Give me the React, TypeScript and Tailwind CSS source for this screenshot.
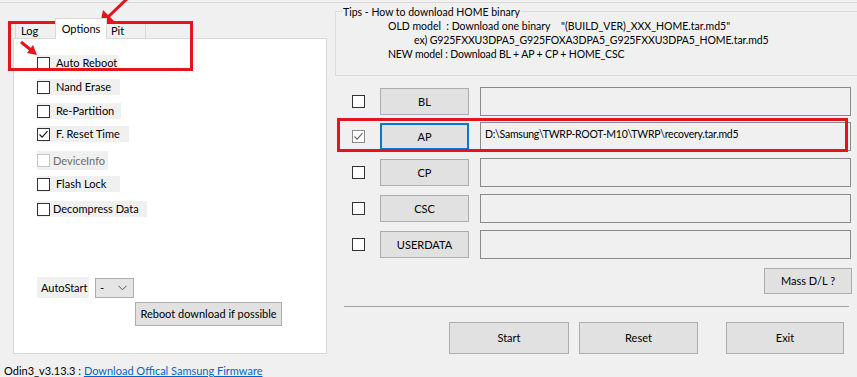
import React from "react";

function Check({ color = "#1a1a1a" }: { color?: string }) {
  return (
    <svg width="11" height="11" viewBox="0 0 11 11">
      <path d="M1.5 5.5 L4.2 8.2 L9.5 2.2" fill="none" stroke={color} strokeWidth="1.2" />
    </svg>
  );
}

function Box({ checked = false, disabled = false, soft = false }: { checked?: boolean; disabled?: boolean; soft?: boolean }) {
  const border = disabled ? "border-[#c4c4c4]" : soft ? "border-[#8a8a8a]" : "border-[#333333]";
  return (
    <span className={`w-[13px] h-[13px] shrink-0 border ${border} bg-white flex items-center justify-center`}>
      {checked && <Check color={soft ? "#6a6a6a" : "#1a1a1a"} />}
    </span>
  );
}

function OptRow({ label, w, mt, h = "h-[16px]", checked = false, disabled = false, gap = "ml-[6px]" }: { label: string; w: string; mt: string; h?: string; checked?: boolean; disabled?: boolean; gap?: string }) {
  return (
    <div className={`flex items-center bg-[#f0f0f0] ${w} ${h} ${mt}`}>
      <Box checked={checked} disabled={disabled} />
      <span className={`${gap} whitespace-nowrap ${disabled ? "text-[#6d6d6d]" : ""}`}>{label}</span>
    </div>
  );
}

function Btn({ label, cls }: { label: string; cls: string }) {
  return (
    <div className={`flex items-center justify-center whitespace-nowrap bg-[#e1e1e1] border border-[#adadad] ${cls}`}>{label}</div>
  );
}

function FileRow({ label, checked = false, active = false, value = "", mt }: { label: string; checked?: boolean; active?: boolean; value?: string; mt: string }) {
  return (
    <div className={`flex items-center h-[29px] ${mt}`}>
      <span className="ml-[17px]">
        <Box checked={checked} soft={checked} />
      </span>
      <div
        className={`ml-[15px] w-[89px] h-[27px] flex items-center justify-center bg-[#e1e1e1] ${active ? "border-2 border-[#0078d7]" : "border border-[#adadad]"}`}
      >
        {label}
      </div>
      <div className="ml-[11px] w-[371px] h-[29px] border border-[#8a8a8a] bg-[#f0f0f0] px-[4px] pt-[4px] leading-[14px] text-[10.5px] tracking-[-0.25px] whitespace-nowrap overflow-hidden">
        {value}
      </div>
    </div>
  );
}

export default function App() {
  return (
    <div className="relative w-[857px] h-[377px] overflow-hidden bg-[#f0f0f0] text-[11px] text-black font-['Lato','Noto_Sans',sans-serif] leading-[16px]">
      <div className="pt-[2px]">
        <div className="border-t border-[#dadada] flex h-[358px]">
          {/* Left column */}
          <div className="w-[335px] shrink-0 pl-[13px] pt-[15px]">
            <div className="flex items-end h-[20px] pl-[2px]">
              <div className="w-[40px] h-[16px] border-t border-l border-[#d9d9d9] flex items-center pl-[5px]">Log</div>
              <div className="relative z-10 w-[52px] h-[21px] -mb-[1px] bg-white border-t border-x border-[#d9d9d9] flex items-start justify-center pt-[2px]">Options</div>
              <div className="w-[39px] h-[16px] border-t border-r border-[#d9d9d9] flex items-center pl-[4px]">Pit</div>
            </div>
            <div className="w-[314px] h-[316px] bg-white border border-[#d9d9d9] pl-[23px] pt-[16px] flex flex-col items-start">
              <OptRow label="Auto Reboot" w="w-[82px]" mt="mt-0" />
              <OptRow label="Nand Erase" w="w-[83px]" mt="mt-[8px]" />
              <OptRow label="Re-Partition" w="w-[84px]" mt="mt-[8px]" />
              <OptRow label="F. Reset Time" w="w-[92px]" mt="mt-[7px]" checked />
              <OptRow label="DeviceInfo" w="w-[71px]" h="h-[19px]" mt="mt-[9px]" disabled gap="ml-[3px]" />
              <OptRow label="Flash Lock" w="w-[83px]" mt="mt-[6px]" />
              <OptRow label="Decompress Data" w="w-[110px]" mt="mt-[9px]" gap="ml-[3px]" />
              <div className="flex items-center mt-[60px]">
                <div className="w-[52px] h-[21px] bg-[#f0f0f0] flex items-center pl-[4px]">AutoStart</div>
                <div className="ml-[6px] w-[39px] h-[20px] border border-[#adadad] bg-[#e5e5e5] flex items-center justify-between pl-[4px] pr-[6px]">
                  <span>-</span>
                  <svg width="9" height="6" viewBox="0 0 9 6">
                    <path d="M0.5 0.8 L4.5 4.8 L8.5 0.8" fill="none" stroke="#555" strokeWidth="1" />
                  </svg>
                </div>
              </div>
              <Btn label="Reboot download if possible" cls="ml-[98px] mt-[4px] w-[147px] h-[24px]" />
            </div>
          </div>
          {/* Right column */}
          <div className="flex-1 flex flex-col pt-[8px]">
            <div className="relative w-[530px] h-[65px] border border-[#dcdcdc] pt-[7px] pl-[52px] leading-[14px] text-[10.5px] whitespace-pre">
              <span className="absolute left-[6px] top-[-8px] bg-[#f0f0f0] px-[1px] leading-[16px]">Tips - How to download HOME binary</span>
              <div>{'OLD model  : Download one binary    "(BUILD_VER)_XXX_HOME.tar.md5"'}</div>
              <div className="pl-[26px] tracking-[-0.1px]">ex) G925FXXU3DPA5_G925FOXA3DPA5_G925FXXU3DPA5_HOME.tar.md5</div>
              <div className="tracking-[-0.15px]">NEW model : Download BL + AP + CP + HOME_CSC</div>
            </div>
            <FileRow label="BL" mt="mt-[11px]" />
            <FileRow label="AP" mt="mt-[6px]" checked active value="D:\Samsung\TWRP-ROOT-M10\TWRP\recovery.tar.md5" />
            <FileRow label="CP" mt="mt-[7px]" />
            <FileRow label="CSC" mt="mt-[7px]" />
            <FileRow label="USERDATA" mt="mt-[7px]" />
            <div className="flex justify-end pr-[13px] mt-[9px]">
              <Btn label="Mass D/L ?" cls="w-[88px] h-[26px]" />
            </div>
            <div className="ml-[9px] w-[505px] mt-[12px] border-t border-[#a0a0a0]" />
            <div className="flex mt-[15px]">
              <Btn label="Start" cls="ml-[114px] w-[120px] h-[32px]" />
              <Btn label="Reset" cls="ml-[10px] w-[119px] h-[32px]" />
              <Btn label="Exit" cls="ml-[28px] w-[118px] h-[32px]" />
            </div>
          </div>
        </div>
        <div className="pl-[4px] pt-[3px] leading-[15px] whitespace-pre">
          <span>Odin3_v3.13.3 : </span>
          <span className="text-[#0066cc] underline">Download Offical Samsung Firmware</span>
        </div>
      </div>
      {/* Annotation overlay */}
      <svg className="absolute inset-0 pointer-events-none" width="857" height="377" viewBox="0 0 857 377">
        <rect x="9.5" y="22.5" width="182" height="47" fill="none" stroke="#e3141c" strokeWidth="3" />
        <rect x="338.5" y="119.5" width="508" height="31" fill="none" stroke="#e3141c" strokeWidth="3" />
        <line x1="132" y1="-6" x2="107" y2="18" stroke="#e3141c" strokeWidth="3" />
        <polygon points="100,25 103,10 115,22" fill="#e3141c" />
        <line x1="21" y1="42" x2="31" y2="50" stroke="#e3141c" strokeWidth="3" />
        <polygon points="37,55 27,53 33,45" fill="#e3141c" />
      </svg>
    </div>
  );
}
